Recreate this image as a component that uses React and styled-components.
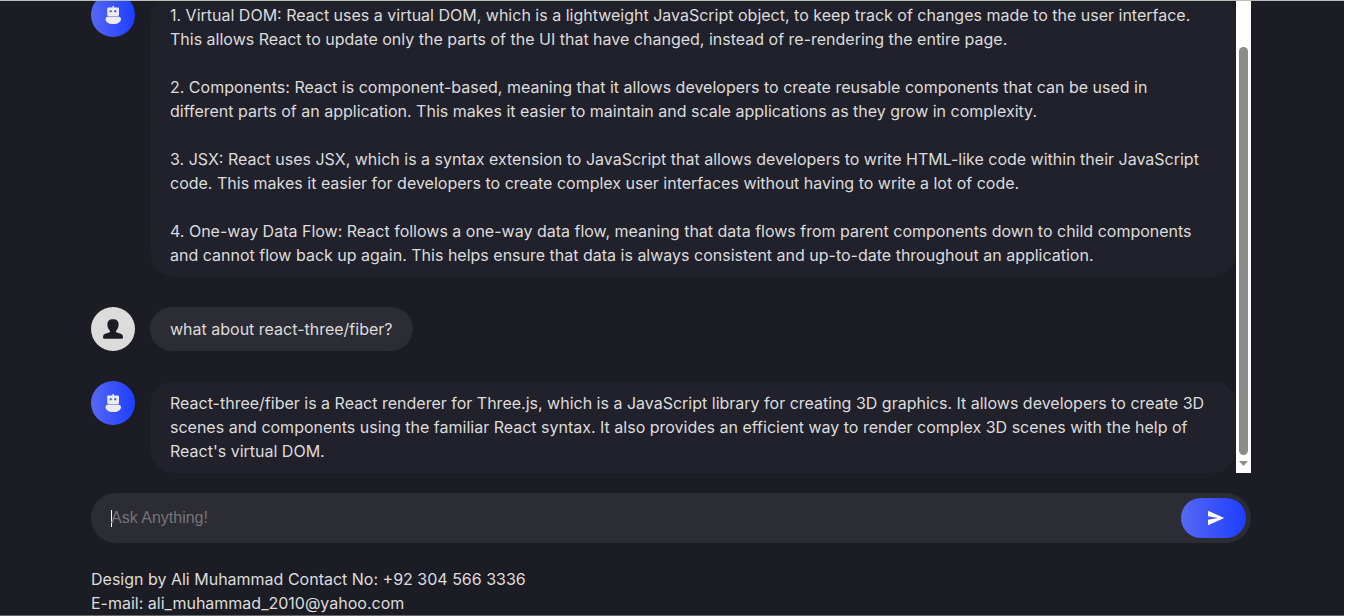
import React, { useState } from "react";
import styled, { createGlobalStyle, css } from "styled-components";

const GlobalStyle = createGlobalStyle`
  * { box-sizing: border-box; }
  body {
    margin: 0;
    background: #ffffff;
    font-family: Inter, "Liberation Sans", sans-serif;
    font-size: 16px;
    line-height: 24px;
    color: #dcdcdc;
  }
`;

const accent = "linear-gradient(90deg, #5768f3 0%, #1c3eff 100%)";

const Page = styled.div`
  display: flex;
  flex-direction: column;
  height: 100vh;
  margin-right: 3px;
  padding: 0 93px 0 91px;
  background: #1c1c25;
  border-top: 1px solid #b9bdba;
  border-bottom: 1px solid #646466;
`;

const Chat = styled.main`
  display: flex;
  flex: 1;
  min-height: 0;
`;

const Scroller = styled.div`
  display: flex;
  flex: 1;
  flex-direction: column-reverse;
  overflow-y: auto;
  scrollbar-width: none;
`;

const Messages = styled.div`
  display: flex;
  flex-direction: column;
  gap: 30px;
`;

const ScrollTrack = styled.div`
  display: flex;
  flex-direction: column;
  align-items: center;
  width: 15px;
  padding: 46px 0 7px;
  background: #fdfdfd;
`;

const ScrollThumb = styled.div`
  flex: 1;
  width: 9px;
  border-radius: 5px;
  background: #8b8b8b;
`;

const ScrollArrow = styled.svg`
  width: 9px;
  height: 5px;
  margin-top: 6px;
  fill: #8b8b8b;
`;

const Row = styled.article`
  display: flex;
  align-items: flex-start;
  gap: 15px;
`;

const Avatar = styled.div`
  display: flex;
  flex: none;
  align-items: center;
  justify-content: center;
  width: 44px;
  height: 44px;
  border-radius: 50%;
  background: ${(p) => (p.$bot ? accent : "#dcdcdc")};
`;

const Icon = styled.svg`
  display: block;
  width: 24px;
  height: 24px;
`;

const Bubble = styled.div`
  padding: 10px 20px;
  border-radius: 24px;
  background: #2c2c35;
  white-space: pre-wrap;
  ${(p) => p.$bot && css`
    flex: 1;
    padding-right: 24px;
    background: #21212b;
  `}
`;

const AskForm = styled.form`
  display: flex;
  align-items: center;
  height: 50px;
  margin: 20px 0 24px;
  padding: 5px 5px 5px 20px;
  border-radius: 25px;
  background: #2c2c35;
`;

const Caret = styled.span`
  width: 1px;
  height: 17px;
  margin-right: -1px;
  background: #ffffff;
`;

const AskInput = styled.input`
  flex: 1;
  min-width: 0;
  height: 40px;
  padding: 0;
  border: 0;
  outline: 0;
  background: transparent;
  color: #dcdcdc;
  font: 16px "Liberation Sans", sans-serif;
  &::placeholder { color: #757575; }
`;

const SendButton = styled.button`
  display: flex;
  align-items: center;
  justify-content: center;
  width: 65px;
  height: 40px;
  padding: 0 0 0 4px;
  border: 0;
  border-radius: 20px;
  background: ${accent};
  cursor: pointer;
`;

const SendIcon = styled.svg`
  display: block;
  width: 18px;
  height: 16px;
  fill: #ffffff;
`;

const Footer = styled.footer`
  font-weight: 400;
`;

const Line = styled.div``;

function BotIcon() {
  return (
    <Icon viewBox="0 0 24 24" aria-hidden="true">
      <path
        fill="#ececec"
        fillRule="evenodd"
        d="M11.5 3h1.500v1.500H16.800c.8 0 1.200.4 1.200 1.200v6c0 .8-.4 1.200-1.200 1.200H7.400c-.8 0-1.200-.4-1.200-1.200v-6c0-.8.4-1.200 1.200-1.200h4.100zM8.700 7.200v2h2v-2zm4.600 0v2h2v-2zM7.500 13.500h9.500c1.700 0 3 1.100 3 2.600 0 2.900-2.700 5-7.700 5s-7.800-2.100-7.800-5c0-1.500 1.300-2.600 3-2.600z"
      />
    </Icon>
  );
}

function UserIcon() {
  return (
    <Icon viewBox="0 0 24 24" aria-hidden="true">
      <path
        fill="#1c1c25"
        d="M12 2.300c3.700 0 5.900 2 5.600 5.700-.2 2.700-1.100 4.400-2.300 5.500-.6.700-.4 1.700.6 2.100l3.700 1.100c1.800.6 2.400 1.700 2.400 3.800 0 .8-.3 1.200-1 1.200H3c-.7 0-1-.4-1-1.200 0-2.100.6-3.200 2.400-3.800l3.700-1.100c1-.4 1.200-1.400.6-2.100C7.500 12.400 6.600 10.700 6.400 8 6.100 4.300 8.300 2.300 12 2.300z"
      />
    </Icon>
  );
}

const messages = [
  {
    bot: true,
    text: `1. Virtual DOM: React uses a virtual DOM, which is a lightweight JavaScript object, to keep track of changes made to the user interface. This allows React to update only the parts of the UI that have changed, instead of re-rendering the entire page.

2. Components: React is component-based, meaning that it allows developers to create reusable components that can be used in different parts of an application. This makes it easier to maintain and scale applications as they grow in complexity.

3. JSX: React uses JSX, which is a syntax extension to JavaScript that allows developers to write HTML-like code within their JavaScript code. This makes it easier for developers to create complex user interfaces without having to write a lot of code.

4. One-way Data Flow: React follows a one-way data flow, meaning that data flows from parent components down to child components and cannot flow back up again. This helps ensure that data is always consistent and up-to-date throughout an application.`,
  },
  { bot: false, text: "what about react-three/fiber?" },
  {
    bot: true,
    text: "React-three/fiber is a React renderer for Three.js, which is a JavaScript library for creating 3D graphics. It allows developers to create 3D scenes and components using the familiar React syntax. It also provides an efficient way to render complex 3D scenes with the help of React's virtual DOM.",
  },
];

export default function App() {
  const [question, setQuestion] = useState("");
  return (
    <>
      <GlobalStyle />
      <Page>
        <Chat>
          <Scroller>
            <Messages>
              {messages.map((m) => (
                <Row key={m.text}>
                  <Avatar $bot={m.bot}>{m.bot ? <BotIcon /> : <UserIcon />}</Avatar>
                  <Bubble $bot={m.bot}>{m.text}</Bubble>
                </Row>
              ))}
            </Messages>
          </Scroller>
          <ScrollTrack aria-hidden="true">
            <ScrollThumb />
            <ScrollArrow viewBox="0 0 9 5">
              <path d="M0 0h9L4.500 5z" />
            </ScrollArrow>
          </ScrollTrack>
        </Chat>
        <AskForm onSubmit={(e) => e.preventDefault()}>
          {question === "" && <Caret />}
          <AskInput
            type="text"
            aria-label="Ask Anything!"
            placeholder="Ask Anything!"
            value={question}
            onChange={(e) => setQuestion(e.target.value)}
          />
          <SendButton type="submit" aria-label="Send">
            <SendIcon viewBox="0 0 18 16" aria-hidden="true">
              <path d="M1 .7 17.200 8 1 15.300V9.800L11 8 1 6.200z" />
            </SendIcon>
          </SendButton>
        </AskForm>
        <Footer>
          <Line>Design by Ali Muhammad Contact No: +92 304 566 3336</Line>
          <Line>E-mail: ali_muhammad_2010@yahoo.com</Line>
        </Footer>
      </Page>
    </>
  );
}
